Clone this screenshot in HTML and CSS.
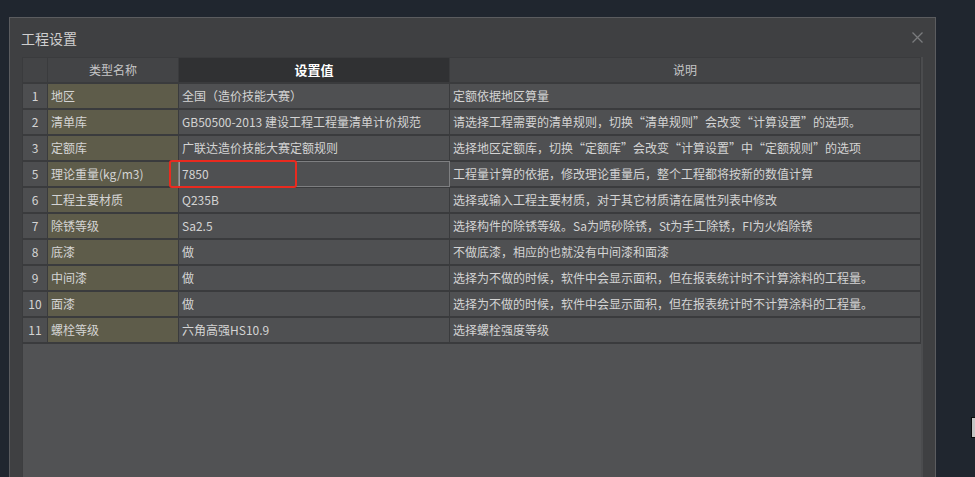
FILE: index.html
```html
<!DOCTYPE html>
<html lang="zh-CN">
<head>
<meta charset="utf-8">
<title>工程设置</title>
<link rel="stylesheet" href="styles.css">
</head>
<body>
<div class="dialog">
  <div class="titlebar">
    <span class="title">工程设置</span>
    <svg class="close" width="11" height="11" viewBox="0 0 11 11"><path d="M0.5 0.5 L10.5 10.5 M10.5 0.5 L0.5 10.5" stroke="#7a7b7d" stroke-width="1.3" fill="none"/></svg>
  </div>
  <div class="panel">
    <div class="table-area">
      <div class="grid">
        <div class="cell hd"></div>
        <div class="cell hd">类型名称</div>
        <div class="cell hd hd-sel">设置值</div>
        <div class="cell hd">说明</div>

        <div class="cell rn">1</div>
        <div class="cell nm">地区</div>
        <div class="cell val">全国（造价技能大赛）</div>
        <div class="cell desc">定额依据地区算量</div>

        <div class="cell rn">2</div>
        <div class="cell nm">清单库</div>
        <div class="cell val">GB50500-2013 建设工程工程量清单计价规范</div>
        <div class="cell desc">请选择工程需要的清单规则，切换“清单规则”会改变“计算设置”的选项。</div>

        <div class="cell rn">3</div>
        <div class="cell nm">定额库</div>
        <div class="cell val">广联达造价技能大赛定额规则</div>
        <div class="cell desc">选择地区定额库，切换“定额库”会改变“计算设置”中“定额规则”的选项</div>

        <div class="cell rn">5</div>
        <div class="cell nm">理论重量(kg/m3)</div>
        <div class="cell val sel">7850<span class="mark"></span></div>
        <div class="cell desc">工程量计算的依据，修改理论重量后，整个工程都将按新的数值计算</div>

        <div class="cell rn">6</div>
        <div class="cell nm">工程主要材质</div>
        <div class="cell val">Q235B</div>
        <div class="cell desc">选择或输入工程主要材质，对于其它材质请在属性列表中修改</div>

        <div class="cell rn">7</div>
        <div class="cell nm">除锈等级</div>
        <div class="cell val">Sa2.5</div>
        <div class="cell desc">选择构件的除锈等级。Sa为喷砂除锈，St为手工除锈，FI为火焰除锈</div>

        <div class="cell rn">8</div>
        <div class="cell nm">底漆</div>
        <div class="cell val">做</div>
        <div class="cell desc">不做底漆，相应的也就没有中间漆和面漆</div>

        <div class="cell rn">9</div>
        <div class="cell nm">中间漆</div>
        <div class="cell val">做</div>
        <div class="cell desc">选择为不做的时候，软件中会显示面积，但在报表统计时不计算涂料的工程量。</div>

        <div class="cell rn">10</div>
        <div class="cell nm">面漆</div>
        <div class="cell val">做</div>
        <div class="cell desc">选择为不做的时候，软件中会显示面积，但在报表统计时不计算涂料的工程量。</div>

        <div class="cell rn">11</div>
        <div class="cell nm">螺栓等级</div>
        <div class="cell val">六角高强HS10.9</div>
        <div class="cell desc">选择螺栓强度等级</div>
      </div>
      <div class="filler"></div>
    </div>
    <div class="scroll"></div>
  </div>
</div>
<div class="edge"></div>
</body>
</html>
```

FILE: styles.css
```css
html, body {
  margin: 0;
  padding: 0;
}
body {
  width: 975px;
  height: 477px;
  overflow: hidden;
  position: relative;
  background: #20262f;
  font-family: "Noto Sans CJK SC", "Microsoft YaHei", sans-serif;
}
.dialog {
  margin: 17px 0 0 9px;
  width: 925px;
  height: 470px;
  border: 1px solid #5b5c5f;
  background: #3f4042;
  display: flex;
  flex-direction: column;
}
.titlebar {
  height: 39px;
  flex: none;
  display: flex;
  align-items: center;
  justify-content: space-between;
  padding: 0 12px 0 11px;
}
.title {
  font-size: 14px;
  color: #cfcfcf;
  letter-spacing: 0;
}
.close {
  display: block;
}
.panel {
  margin: 0 12px;
  flex: 1;
  min-height: 0;
  display: flex;
}
.table-area {
  width: 899px;
  display: flex;
  flex-direction: column;
}
.grid {
  display: grid;
  grid-template-columns: 24px 130px 270px 470px;
  column-gap: 1px;
  row-gap: 2px;
  padding: 1px 1px 2px 1px;
  background: #3a3b3d;
}
.filler {
  flex: 1;
  background: #515254;
  border-left: 1px solid #3d3e40;
}
.scroll {
  width: 2px;
  background: #4b4c4e;
}
.cell {
  height: 24px;
  line-height: 24px;
  font-size: 12px;
  color: #d4d4d4;
  padding-left: 3px;
  white-space: nowrap;
  box-sizing: border-box;
}
.hd {
  background: #434446;
  color: #c6c6c6;
  text-align: center;
  padding-left: 0;
}
.hd-sel {
  background: #303133;
  color: #ffffff;
  font-weight: bold;
  font-size: 13px;
}
.rn {
  background: #4d4e50;
  text-align: center;
  padding-left: 0;
}
.nm {
  background: #5e5c4a;
}
.val, .desc {
  background: #4f5052;
}
.sel {
  position: relative;
  z-index: 1;
  box-shadow: 0 0 0 1px #7e7f81, inset 1px 0 0 #9a9a9a;
}
.mark {
  position: absolute;
  left: -10px;
  top: -2px;
  width: 128px;
  height: 28px;
  border: 2px solid #ea2a1f;
  border-radius: 3px;
  box-sizing: border-box;
}
.edge {
  position: absolute;
  left: 971px;
  top: 417px;
  width: 10px;
  height: 19px;
  background: #c4c4c4;
  border: 1px solid #0c0c0c;
}
```
